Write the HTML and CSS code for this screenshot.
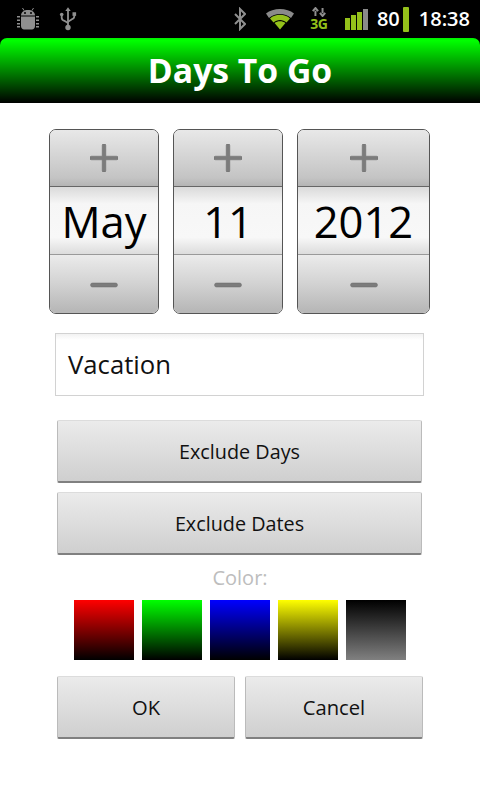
FILE: index.html
```html
<!DOCTYPE html>
<html lang="en">
<head>
<meta charset="utf-8">
<title>Days To Go</title>
<link rel="stylesheet" href="styles.css">
</head>
<body>
<div class="screen">
  <header class="status">
    <div class="status-left">
      <svg class="ic-android" width="22" height="24" viewBox="0 0 22 24"><g fill="#8f8f8f"><path d="M4 8.500C4 5 7 3 11 3s7 2 7 5.500z"/><path d="M4 9.500h14v9.500c0 2-1.500 3.500-3 3.500H7c-1.500 0-3-1.500-3-3.500z"/><path d="M0 9h3v1.600H0zM0 12.500h3v1.600H0zM0 16h3v1.600H0zM0 19h3v1.600H0zM19 9h3v1.600h-3zM19 12.500h3v1.600h-3zM19 16h3v1.600h-3zM19 19h3v1.600h-3z"/></g><path d="M7 3.500L5.500 1M15 3.500L16.500 1" stroke="#8f8f8f" stroke-width="1"/><circle cx="8" cy="6" r="1" fill="#000"/><circle cx="14" cy="6" r="1" fill="#000"/></svg>
      <svg class="ic-usb" width="18" height="26" viewBox="0 0 20 26"><g fill="none" stroke="#8f8f8f" stroke-width="2"><path d="M10 3v18"/><path d="M3 9v2.500c0 2 1.500 3 3 3.500l4 2.500"/><path d="M17 8v2c0 2-1.500 3-3 3.500L10 16"/></g><g fill="#8f8f8f"><path d="M10 0l3 4H7z"/><circle cx="3" cy="8" r="2"/><rect x="15" y="5.500" width="4" height="4"/><circle cx="10" cy="22.500" r="3"/></g></svg>
    </div>
    <div class="status-right">
      <svg class="ic-bt" width="12" height="24" viewBox="0 0 12 24"><path d="M1 7l10 10-5 5V2l5 5L1 17" fill="none" stroke="#8f8f8f" stroke-width="2"/></svg>
      <svg class="ic-wifi" width="30" height="24" viewBox="0 0 30 24"><path d="M1 6.500C8 0.500 22 0.500 29 6.500L26 11C20 5.500 10 5.500 4 11z" fill="#8a8a8a"/><path d="M5 11.500C10 6.500 20 6.500 25 11.500L21.500 15.500C18 12 12 12 8.500 15.500z" fill="#94c11a"/><path d="M9.500 16C12.500 13.500 17.500 13.500 20.500 16L15 22.500z" fill="#94c11a"/></svg>
      <div class="ic-3g"><svg width="16" height="10" viewBox="0 0 18 11"><path d="M5 10V4M2 4.500L5 1l3 3.500" fill="none" stroke="#8f8f8f" stroke-width="2.200"/><path d="M13 1v6M10 6.500l3 3.500 3-3.500" fill="none" stroke="#8f8f8f" stroke-width="2.200"/></svg><span class="g3">3G</span></div>
      <div class="signal"><i class="b1"></i><i class="b2"></i><i class="b3"></i><i class="b4"></i></div>
      <div class="battery"><span class="pct">80</span><span class="bat-bar"></span></div>
      <span class="clock">18:38</span>
    </div>
  </header>
  <div class="titlebar"><h1>Days To Go</h1></div>
  <main class="content">
    <div class="pickers">
      <div class="picker p-month">
        <div class="step plus"><svg width="28" height="28" viewBox="0 0 28 28"><path class="sym" d="M12.200 1.500a1.800 1.800 0 0 1 3.600 0V12.200h10.700a1.800 1.800 0 0 1 0 3.600H15.800v10.700a1.800 1.800 0 0 1-3.600 0V15.800H1.500a1.800 1.800 0 0 1 0-3.600H12.200z"/></svg></div>
        <div class="val">May</div>
        <div class="step minus"><svg width="28" height="6" viewBox="0 0 28 6"><rect class="sym" x=".5" y="1" width="27" height="4" rx="2"/></svg></div>
      </div>
      <div class="picker p-day">
        <div class="step plus"><svg width="28" height="28" viewBox="0 0 28 28"><path class="sym" d="M12.200 1.500a1.800 1.800 0 0 1 3.600 0V12.200h10.700a1.800 1.800 0 0 1 0 3.600H15.800v10.700a1.800 1.800 0 0 1-3.600 0V15.800H1.500a1.800 1.800 0 0 1 0-3.600H12.200z"/></svg></div>
        <div class="val">11</div>
        <div class="step minus"><svg width="28" height="6" viewBox="0 0 28 6"><rect class="sym" x=".5" y="1" width="27" height="4" rx="2"/></svg></div>
      </div>
      <div class="picker p-year">
        <div class="step plus"><svg width="28" height="28" viewBox="0 0 28 28"><path class="sym" d="M12.200 1.500a1.800 1.800 0 0 1 3.600 0V12.200h10.700a1.800 1.800 0 0 1 0 3.600H15.800v10.700a1.800 1.800 0 0 1-3.600 0V15.800H1.500a1.800 1.800 0 0 1 0-3.600H12.200z"/></svg></div>
        <div class="val">2012</div>
        <div class="step minus"><svg width="28" height="6" viewBox="0 0 28 6"><rect class="sym" x=".5" y="1" width="27" height="4" rx="2"/></svg></div>
      </div>
    </div>
    <div class="edit">Vacation</div>
    <div class="btn wide first">Exclude Days</div>
    <div class="btn wide second">Exclude Dates</div>
    <div class="color-label">Color:</div>
    <div class="swatches">
      <span class="sw red"></span><span class="sw green"></span><span class="sw blue"></span><span class="sw yellow"></span><span class="sw gray"></span>
    </div>
    <div class="actions">
      <div class="btn half">OK</div>
      <div class="btn half">Cancel</div>
    </div>
  </main>
</div>
</body>
</html>
```

FILE: styles.css
```css
* { box-sizing: border-box; }
html, body { margin: 0; padding: 0; background: #000; }
body { font-family: "Open Sans", "Noto Sans", sans-serif; }
.screen { width: 480px; height: 800px; display: flex; flex-direction: column; overflow: hidden; background: #000; }

.status { height: 38px; flex: none; display: flex; justify-content: space-between; align-items: center; padding: 0 10px 0 17px; }
.status-left { display: flex; align-items: center; gap: 20px; }
.ic-usb { margin-top: -1px; }
.status-right { display: flex; align-items: center; }
.ic-bt { margin-right: 19px; }
.ic-wifi { margin-right: 15px; }
.ic-3g { width: 18px; display: flex; flex-direction: column; align-items: center; margin-right: 17px; height: 24px; }
.g3 { font-size: 14px; font-weight: 700; line-height: 14px; color: #94c11a; letter-spacing: -.5px; }
.signal { display: flex; align-items: flex-end; gap: 1px; height: 21px; margin-right: 9px; }
.signal i { display: block; width: 5px; background: #94c11a; }
.signal .b1 { height: 12px; }
.signal .b2 { height: 15px; }
.signal .b3 { height: 18px; }
.signal .b4 { height: 21px; background: #8a8a8a; }
.battery { display: flex; align-items: center; margin-right: 10px; }
.pct { font-size: 20px; font-weight: 600; color: #fff; line-height: 24px; margin-right: 3px; }
.bat-bar { width: 6px; height: 25px; background: #94c11a; border-radius: 1px; }
.clock { font-size: 20px; font-weight: 600; color: #fff; line-height: 24px; }

.titlebar { height: 65px; flex: none; border-radius: 7px 7px 0 0; background: linear-gradient(#00f000 0, #00ff00 4%, #000 100%); display: flex; align-items: center; justify-content: center; }
.titlebar h1 { margin: 0; font-size: 33.700px; font-weight: 700; color: #fff; line-height: 65px; }

.content { flex: 1; background: #fff; display: flex; flex-direction: column; align-items: stretch; padding-top: 26px; }

.pickers { display: flex; gap: 14px; margin-left: 49px; }
.picker { height: 185px; display: flex; flex-direction: column; border: 1px solid #555; border-radius: 7px; overflow: hidden; }
.p-month, .p-day { width: 110px; }
.p-year { width: 133px; }
.step { flex: 1; display: flex; align-items: center; justify-content: center; }
.plus { height: 56px; flex: none; background: linear-gradient(#e8e8e8, #c4c4c4 85%, #b4b4b4); }
.minus { height: 58px; flex: none; padding-top: 1px; background: linear-gradient(#ebebeb, #d2d2d2 50%, #b8b8b8 95%); }
.sym { fill: #7c7c7c; stroke: #6a6a6a; stroke-width: .5; }
.val { height: 69px; flex: none; border-top: 1px solid #666; border-bottom: 1px solid #999; background: linear-gradient(#dadada, #f6f6f6 25%, #f8f8f8 75%, #dcdcdc); font-size: 43.500px; line-height: 70px; text-align: center; color: #000; }

.edit { height: 63px; width: 369px; margin: 19px 0 0 55px; border: 1px solid #d2d2d2; background: linear-gradient(#f2f2f2, #fff 10%); font-size: 25.700px; line-height: 62px; padding-left: 12px; color: #111; }

.btn { height: 63px; border-radius: 2px; background: linear-gradient(#ebebeb, #cfcfcf); border-bottom: 2px solid #808080; border-top: 1px solid #dcdcdc; border-left: 1px solid #bbb; border-right: 1px solid #bbb; display: flex; align-items: center; justify-content: center; font-size: 19.800px; color: #111; }
.wide { width: 365px; margin-left: 57px; }
.first { margin-top: 24px; }
.second { margin-top: 9px; }

.color-label { margin-top: 9px; height: 28px; line-height: 28px; text-align: center; font-size: 20px; color: #bdbdbd; }
.swatches { display: flex; gap: 8px; margin: 8px 0 0 74px; }
.sw { display: block; width: 60px; height: 60px; }
.red { background: linear-gradient(#f00, #000); }
.green { background: linear-gradient(#0f0, #000); }
.blue { background: linear-gradient(#00f, #000); }
.yellow { background: linear-gradient(#ff0, #000); }
.gray { background: linear-gradient(#000, #808080); }

.actions { display: flex; gap: 10px; margin: 16px 0 0 57px; }
.half { width: 178px; font-size: 20.200px; }
```
